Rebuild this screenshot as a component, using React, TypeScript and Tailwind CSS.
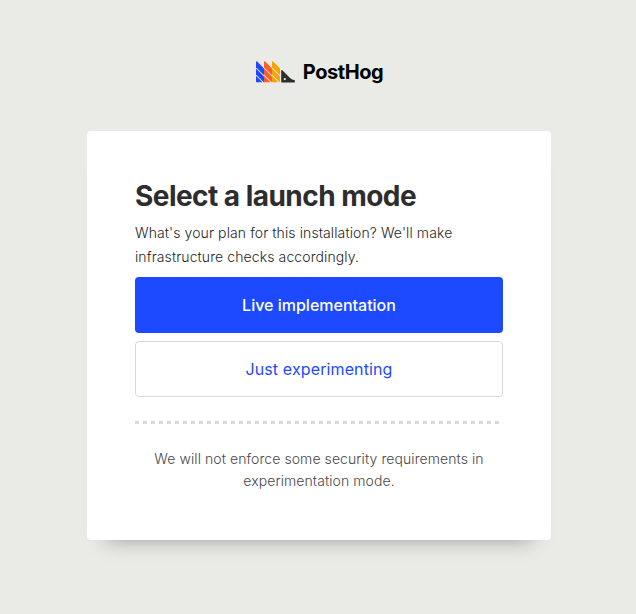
const columns = [
  { x: 0, color: '#1d4aff' },
  { x: 8, color: '#ff5c28' },
  { x: 16, color: '#f9a300' },
];

function Logo() {
  return (
    <svg width="39" height="22" viewBox="0 0 39 22" aria-hidden="true">
      <defs>
        <clipPath id="column">
          <rect width="8" height="21.500" rx="0.5" />
        </clipPath>
      </defs>
      {columns.map(({ x, color }) => (
        <g key={color} transform={`translate(${x} 0)`} fill={color} clipPath="url(#column)">
          <path d="M0 .6Q.2-.3 1.200.6L8 7.500V14.200L0 6.200z" />
          <path d="M0 7.500 8 15.500V21.500L0 13.500z" />
          <path d="M0 14.800 6.700 21.500H0z" />
        </g>
      ))}
      <path fill="#2d2d2d" fillRule="evenodd" d="M25.200 9.700c0-.7.6-.9 1.100-.4l7.500 7.500c1.200 1.300 2.600 2 4.300 2.200.5.100.8.400.8.800v.9c0 .5-.3.800-.8.800H26a.8.8 0 0 1-.8-.8zM28.800 17a1.100 1.100 0 1 0 0 2.200 1.100 1.100 0 0 0 0-2.200z" />
    </svg>
  );
}

export default function App() {
  return (
    <main className="flex h-[614px] w-full flex-col items-center bg-[#eaebe6] pt-[60px] font-['Inter',sans-serif]">
      <header className="ml-[3px] flex h-6 items-center gap-2">
        <Logo />
        <span className="text-[20px] font-bold leading-6 tracking-[-0.45px] text-black">PostHog</span>
      </header>
      <section className="mt-[47px] ml-[2px] h-[409px] w-[464px] rounded bg-white px-12 pt-[46px] text-[#2d2d2d] shadow-[0_18px_20px_-19px_rgba(0,0,0,0.37)]">
        <h1 className="text-[28px] font-bold leading-[38px] tracking-[-0.54px]">Select a launch mode</h1>
        <p className="mt-[6px] text-[14px] font-light leading-6 tracking-[0.1px] text-[#1f1f1f]">What's your plan for this installation? We'll make<br />infrastructure checks accordingly.</p>
        <button className="mt-2 block h-14 w-full rounded bg-[#1d4aff] text-base font-medium text-white">Live implementation</button>
        <button className="mt-2 block h-14 w-full rounded border border-[#d9d9d9] text-base tracking-[0.12px] text-[#1d4aff]">Just experimenting</button>
        <div className="mt-6 h-[3px] bg-[repeating-linear-gradient(90deg,#d9d9d9_0_4px,transparent_4px_8px)]" />
        <p className="mt-6 text-center text-[14px] font-light leading-[22px] tracking-[0.08px] text-[#484848]">We will not enforce some security requirements in experimentation mode.</p>
      </section>
    </main>
  );
}
